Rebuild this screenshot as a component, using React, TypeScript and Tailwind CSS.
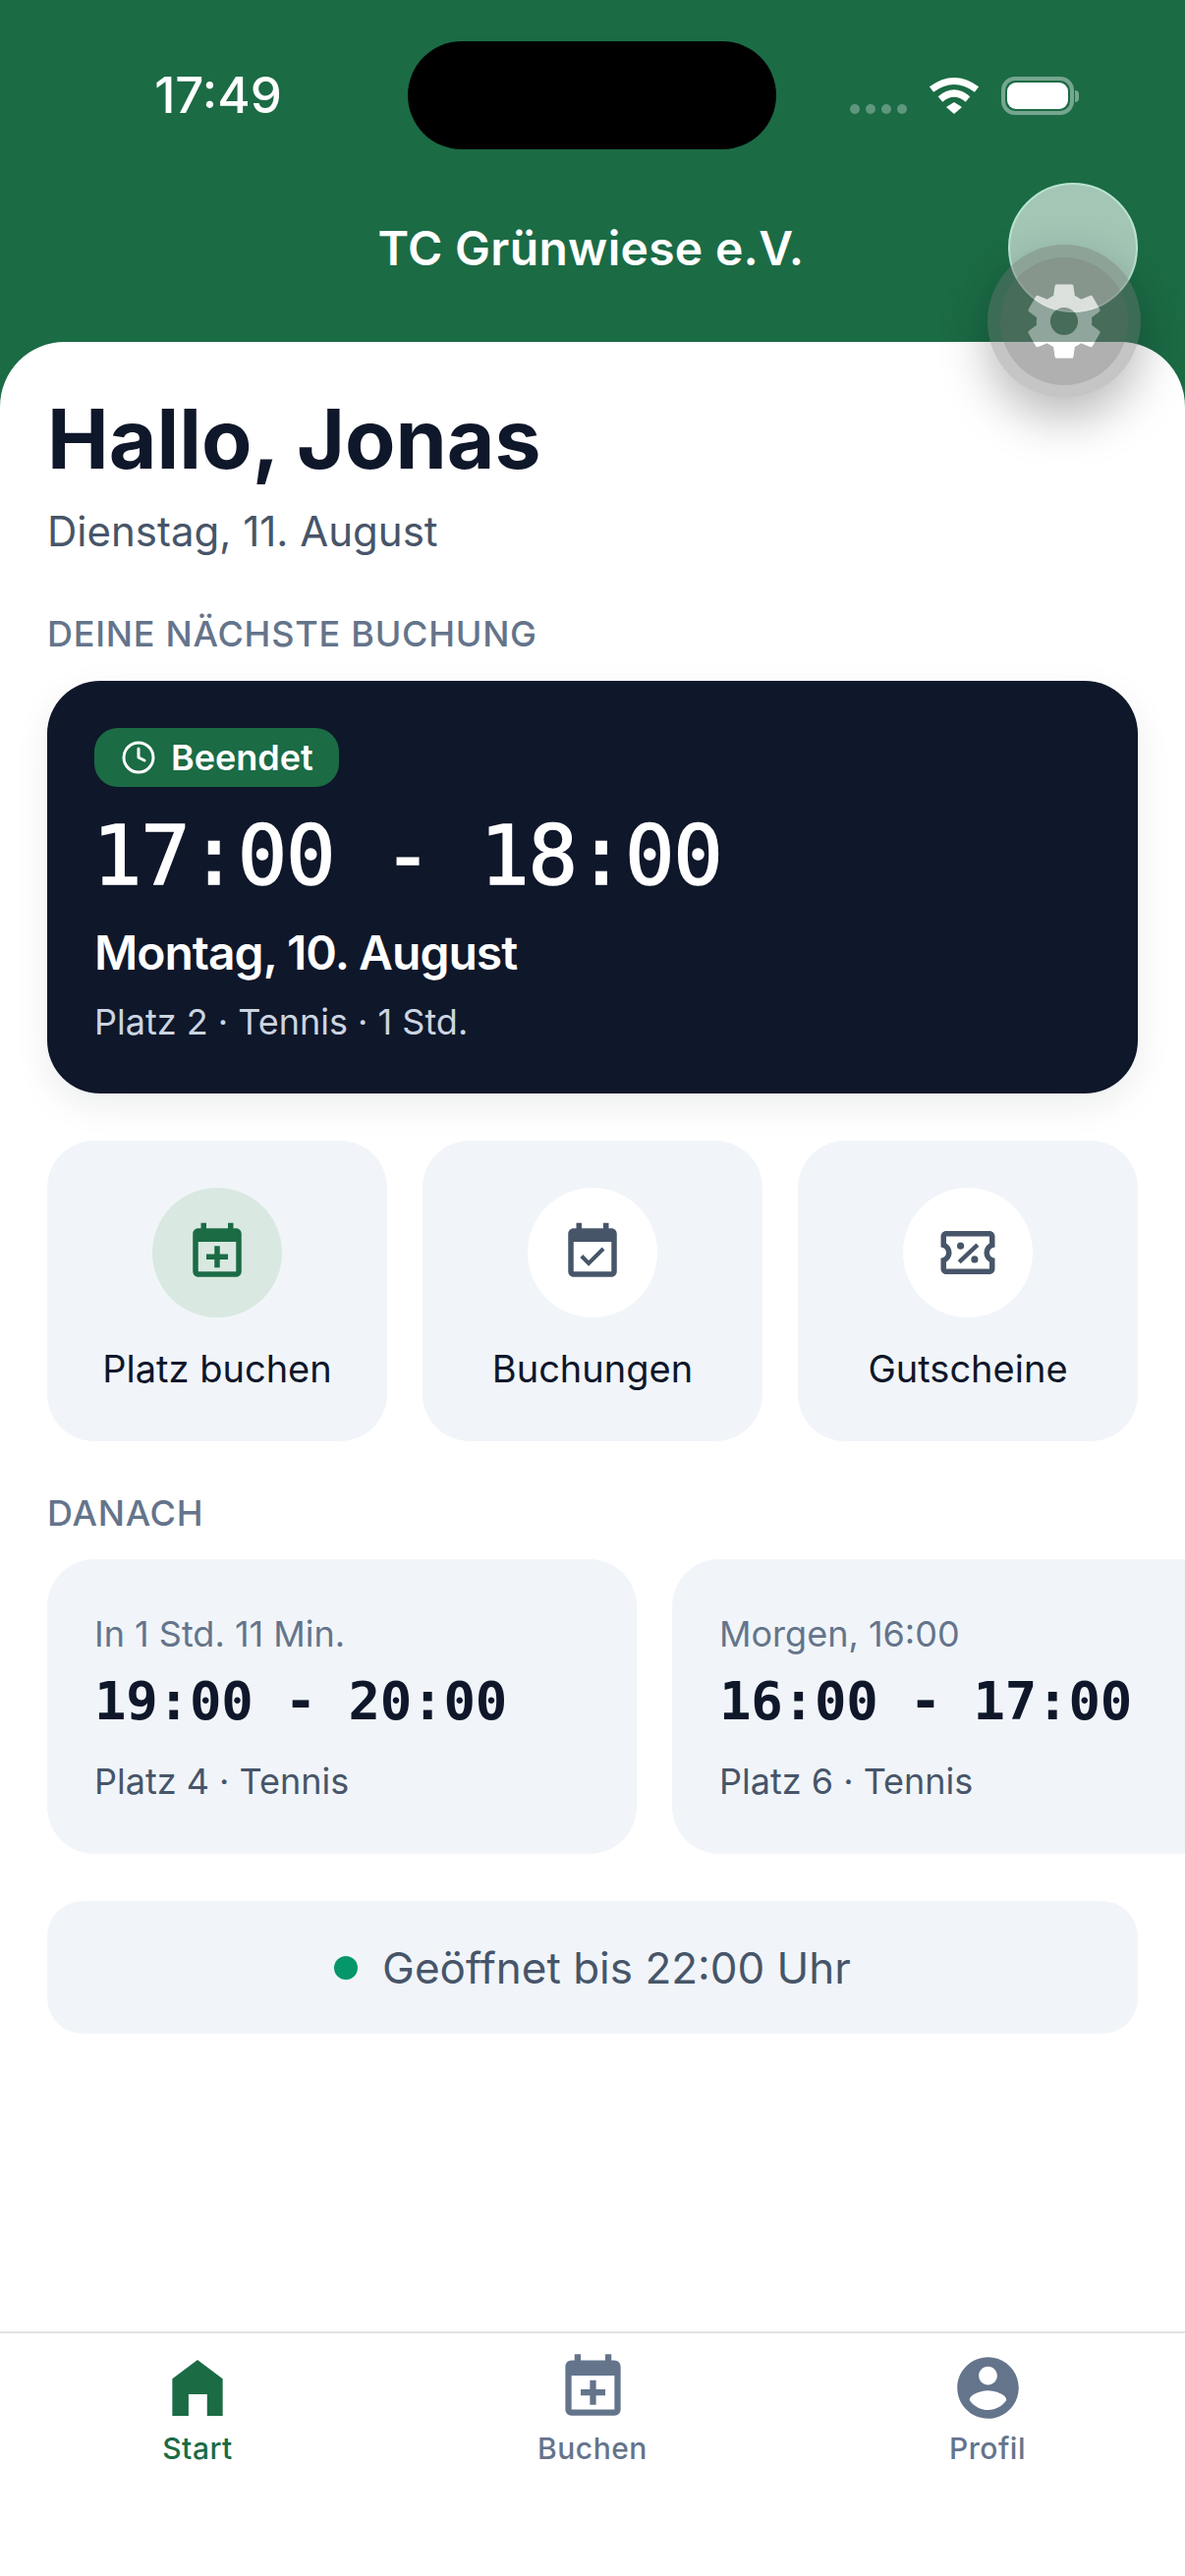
import { Clock } from "lucide-react";

const CAL = "M19 3h-1V1h-2v2H8V1H6v2H5C3.9 3 3 3.9 3 5v14c0 1.1.9 2 2 2h14c1.1 0 2-.9 2-2V5c0-1.1-.9-2-2-2zm0 16H5V8h14v11z";
const PLUS = "M11 9.5h2v3h3v2h-3v3h-2v-3H8v-2h3z";
const CHECK = "M16.53 11.06L15.47 10l-4.88 4.88-2.12-2.12-1.06 1.06L10.59 17l5.94-5.94z";
const TICKET = "M22 10V6c0-1.11-.9-2-2-2H4c-1.1 0-1.99.89-1.99 2v4c1.1 0 1.99.9 1.99 2s-.89 2-2 2v4c0 1.1.9 2 2 2h16c1.1 0 2-.9 2-2v-4c-1.1 0-2-.9-2-2s.9-2 2-2zm-2-1.46c-1.19.69-2 1.99-2 3.46s.81 2.77 2 3.46V18H4v-2.54c1.19-.69 2-1.99 2-3.46 0-1.48-.8-2.77-1.99-3.46L4 6h16v2.54z";
const PROFILE = "M12 2C6.48 2 2 6.48 2 12s4.48 10 10 10 10-4.48 10-10S17.52 2 12 2zm0 3c1.66 0 3 1.34 3 3s-1.34 3-3 3-3-1.34-3-3 1.34-3 3-3zm0 14.2c-2.5 0-4.71-1.28-6-3.22.03-1.99 4-3.08 6-3.08 1.99 0 5.97 1.09 6 3.08-1.29 1.94-3.5 3.22-6 3.22z";
const GEAR = "M19.14 12.94c.04-.3.06-.61.06-.94 0-.32-.02-.64-.07-.94l2.03-1.58c.18-.14.23-.41.12-.61l-1.92-3.32c-.12-.22-.37-.29-.59-.22l-2.39.96c-.5-.38-1.03-.7-1.62-.94l-.36-2.54c-.04-.24-.24-.41-.48-.41h-3.84c-.24 0-.43.17-.47.41l-.36 2.54c-.59.24-1.13.57-1.62.94l-2.39-.96c-.22-.08-.47 0-.59.22L2.74 8.87c-.12.21-.08.47.12.61l2.03 1.58c-.05.3-.09.63-.09.94s.02.64.07.94l-2.03 1.58c-.18.14-.23.41-.12.61l1.92 3.32c.12.22.37.29.59.22l2.39-.96c.5.38 1.03.7 1.62.94l.36 2.54c.05.24.24.41.48.41h3.84c.24 0 .44-.17.47-.41l.36-2.54c.59-.24 1.13-.56 1.62-.94l2.39.96c.22.08.47 0 .59-.22l1.92-3.32c.12-.22.07-.47-.12-.61l-2.01-1.58zM12 15.6c-1.98 0-3.6-1.62-3.6-3.6s1.62-3.6 3.6-3.6 3.6 1.62 3.6 3.6-1.62 3.6-3.6 3.6z";

function Icon({ d, size, className, extra }: { d: string; size: number; className: string; extra?: string }) {
  return (
    <svg width={size} height={size} viewBox="0 0 24 24" className={className} fill="currentColor">
      <path d={d} fillRule="evenodd" />
      {extra && <path d={extra} />}
    </svg>
  );
}

function StatusBar() {
  return (
    <div className="flex items-start pt-[42px]">
      <div className="w-[415px] h-[110px] flex items-center justify-center pl-[29px] text-white text-[51px] font-medium font-['Inter',sans-serif]">
        17:49
      </div>
      <div className="w-[375px] h-[110px] rounded-full bg-black" />
      <div className="flex items-start pl-[75px] pt-[36px] gap-[22px]">
        <div className="flex gap-[6px] pt-[28px]">
          {[0, 1, 2, 3].map((i) => (
            <div key={i} className="w-[10px] h-[10px] rounded-full bg-white/30" />
          ))}
        </div>
        <svg width="52" height="38" viewBox="0 0 52 38" className="shrink-0">
          <path d="M3 13 Q26 -4 49 13" stroke="white" strokeWidth="7" fill="none" />
          <path d="M12 23 Q26 11 40 23" stroke="white" strokeWidth="7" fill="none" />
          <path d="M18 31 L26 26 L34 31 L26 38 Z" fill="white" />
        </svg>
        <div className="flex items-center">
          <div className="w-[74px] h-[39px] rounded-[14px] border-[4px] border-white/40 p-[2px]">
            <div className="w-full h-full rounded-[9px] bg-white" />
          </div>
          <div className="w-[4px] h-[12px] rounded-r-full bg-white/40 ml-[1px]" />
        </div>
      </div>
    </div>
  );
}

function GearOverlay() {
  return (
    <div className="absolute left-[1005px] top-[186px] w-[160px] h-[222px] pointer-events-none">
      <div className="absolute left-[21px] top-[0px] w-[132px] h-[132px] rounded-full bg-[#a3c6b5] border-[2px] border-[#b9e3d2]" />
      <div className="absolute left-[0px] top-[63px] w-[156px] h-[156px] rounded-full bg-[#6e6e6e66] shadow-[0_20px_50px_rgba(0,0,0,0.28)]" />
      <div className="absolute left-[13px] top-[76px] w-[130px] h-[130px] rounded-full bg-[#6e6e6e3d]" />
      <svg width="94" height="94" viewBox="0 0 24 24" className="absolute left-[31px] top-[94px]">
        <defs>
          <clipPath id="bottomPart">
            <rect x="0" y="17.36" width="24" height="7" />
          </clipPath>
          <clipPath id="topPart">
            <circle cx="14.3" cy="-7.15" r="16.85" />
          </clipPath>
        </defs>
        <path d={GEAR} fill="white" fillOpacity="0.4" fillRule="evenodd" />
        <path d={GEAR} fill="white" fillOpacity="0.5" clipPath="url(#topPart)" fillRule="evenodd" />
        <path d={GEAR} fill="white" clipPath="url(#bottomPart)" fillRule="evenodd" />
      </svg>
    </div>
  );
}

function Action({ label, active, children }: { label: string; active?: boolean; children: React.ReactNode }) {
  return (
    <div className="flex-1 h-[306px] rounded-[48px] bg-[#f1f5f9] flex flex-col items-center pt-[48px]">
      <div className={`w-[132px] h-[132px] rounded-full flex items-center justify-center ${active ? "bg-[#d9e8e0]" : "bg-white"}`}>
        {children}
      </div>
      <div className="mt-[26px] text-[38px] leading-[52px] text-[#0f172a]">{label}</div>
    </div>
  );
}

function NextCard({ when, time, place }: { when: string; time: string; place: string }) {
  return (
    <div className="shrink-0 w-[600px] h-[300px] rounded-[48px] bg-[#f1f5f9] pl-[48px] pt-[50px]">
      <div className="text-[36px] leading-[52px] text-[#64748b]">{when}</div>
      <div className="mt-[8px] text-[54px] leading-[70px] font-bold tracking-[-0.2px] text-[#0f172a] font-['DejaVu_Sans_Mono',monospace]">{time}</div>
      <div className="mt-[20px] text-[36px] leading-[52px] text-[#475569]">{place}</div>
    </div>
  );
}

function Tab({ label, active, children }: { label: string; active?: boolean; children: React.ReactNode }) {
  return (
    <div className="flex-1 flex flex-col items-center pt-[18px]">
      <div className="h-[75px] flex items-center justify-center">{children}</div>
      <div className={`mt-[6px] text-[30px] leading-[36px] font-medium tracking-[0.5px] font-['Inter',sans-serif] ${active ? "text-[#1b6b45]" : "text-[#64748b]"}`}>
        {label}
      </div>
    </div>
  );
}

export default function App() {
  return (
    <div className="relative w-[1206px] h-[2622px] overflow-hidden bg-[#1b6b45] flex flex-col font-['Inter',sans-serif]">
      <header className="h-[348px] shrink-0">
        <StatusBar />
        <div className="mt-[66px] text-center pr-[3px] text-white text-[48px] leading-[70px] font-semibold tracking-[0.3px]">TC Grünwiese e.V.</div>
      </header>

      <main className="flex-1 bg-white rounded-t-[66px] px-[48px] pt-[49px]">
        <h1 className="text-[84px] leading-[100px] font-bold text-[#0f172a]">Hallo, Jonas</h1>
        <p className="mt-[14px] text-[42px] leading-[60px] text-[#475569]">Dienstag, 11. August</p>

        <h2 className="mt-[50px] text-[36px] leading-[48px] font-medium tracking-[0.75px] text-[#64748b]">DEINE NÄCHSTE BUCHUNG</h2>
        <section className="mt-[24px] h-[420px] rounded-[54px] bg-[#0f172a] px-[48px] pt-[48px] shadow-[0_12px_36px_rgba(15,23,42,0.08)]">
          <div className="inline-flex items-center h-[60px] rounded-[24px] bg-[#1b6b45] pl-[27px] pr-[26px] gap-[15px] text-white">
            <Clock size={36} strokeWidth={2} />
            <span className="text-[36px] font-semibold">Beendet</span>
          </div>
          <div className="mt-[20px] -ml-[2px] text-[84px] leading-[100px] tracking-[-1.3px] text-white [-webkit-text-stroke:1.5px_white] font-['DejaVu_Sans_Mono',monospace]">17:00 - 18:00</div>
          <div className="mt-[19px] text-[48px] leading-[60px] font-semibold tracking-[-1px] text-white">Montag, 10. August</div>
          <div className="mt-[14px] text-[36px] leading-[52px] text-[#cbd5e1]">Platz 2 · Tennis · 1 Std.</div>
        </section>

        <div className="mt-[48px] flex gap-[36px]">
          <Action label="Platz buchen" active>
            <Icon d={CAL} extra={PLUS} size={66} className="text-[#1b6b45]" />
          </Action>
          <Action label="Buchungen">
            <Icon d={CAL} extra={CHECK} size={66} className="text-[#475569]" />
          </Action>
          <Action label="Gutscheine">
            <svg width="66" height="66" viewBox="0 0 24 24" fill="#475569">
              <path d={TICKET} />
              <circle cx="9.3" cy="9.5" r="1.3" />
              <circle cx="14.5" cy="14.5" r="1.3" />
              <path d="M8.8 15.5 L15.6 9.1" stroke="#475569" strokeWidth="1.6" />
            </svg>
          </Action>
        </div>

        <h2 className="mt-[49px] text-[36px] leading-[48px] font-medium tracking-[0.75px] text-[#64748b]">DANACH</h2>
        <div className="mt-[23px] -mr-[48px] flex gap-[36px] overflow-hidden">
          <NextCard when="In 1 Std. 11 Min." time="19:00 - 20:00" place="Platz 4 · Tennis" />
          <NextCard when="Morgen, 16:00" time="16:00 - 17:00" place="Platz 6 · Tennis" />
        </div>

        <div className="mt-[48px] h-[135px] rounded-[36px] bg-[#f1f5f9] flex items-center justify-center gap-[25px]">
          <div className="w-[24px] h-[24px] rounded-full bg-[#059669]" />
          <span className="text-[44px] text-[#475569]">Geöffnet bis 22:00 Uhr</span>
        </div>
      </main>

      <nav className="h-[249px] shrink-0 bg-white border-t-[2px] border-[#e2e2e2] flex">
        <Tab label="Start" active>
          <svg width="52" height="57" viewBox="0 0 152 169" fill="#1b6b45">
            <path d="M76 0 L152 57 V169 H105 V104 H49 V169 H0 V57 Z" />
          </svg>
        </Tab>
        <Tab label="Buchen">
          <Icon d={CAL} extra={PLUS} size={75} className="text-[#64748b]" />
        </Tab>
        <Tab label="Profil">
          <Icon d={PROFILE} size={75} className="text-[#64748b]" />
        </Tab>
      </nav>

      <GearOverlay />
    </div>
  );
}
